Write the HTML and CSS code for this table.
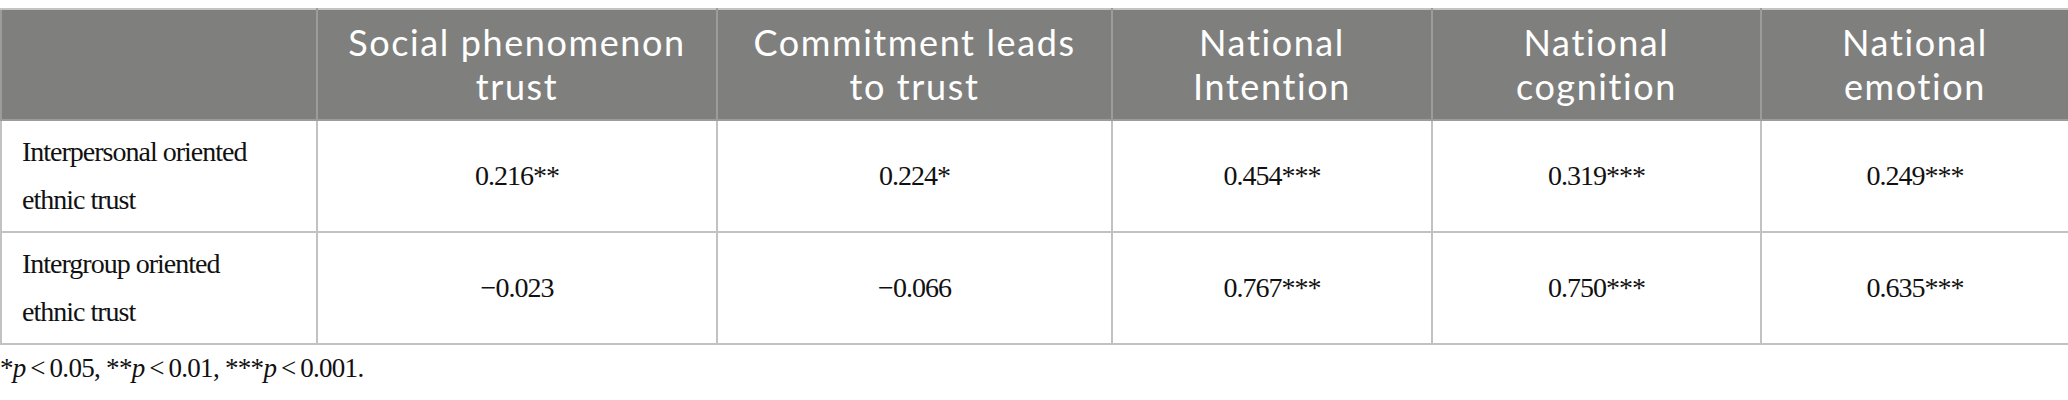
FILE: index.html
```html
<!DOCTYPE html>
<html>
<head>
<meta charset="utf-8">
<link rel="stylesheet" href="styles.css">
</head>
<body>
<div class="wrap">
<table class="data">
  <colgroup>
    <col class="c0"><col class="c1"><col class="c2"><col class="c3"><col class="c4"><col class="c5">
  </colgroup>
  <thead>
    <tr>
      <th></th>
      <th><span class="hl">Social phenomenon</span><span class="hl">trust</span></th>
      <th><span class="hl">Commitment leads</span><span class="hl">to trust</span></th>
      <th><span class="hl">National</span><span class="hl">Intention</span></th>
      <th><span class="hl">National</span><span class="hl">cognition</span></th>
      <th><span class="hl">National</span><span class="hl">emotion</span></th>
    </tr>
  </thead>
  <tbody>
    <tr>
      <td class="label">Interpersonal oriented<br>ethnic trust</td>
      <td>0.216**</td>
      <td>0.224*</td>
      <td>0.454***</td>
      <td>0.319***</td>
      <td>0.249***</td>
    </tr>
    <tr>
      <td class="label">Intergroup oriented<br>ethnic trust</td>
      <td>−0.023</td>
      <td>−0.066</td>
      <td>0.767***</td>
      <td>0.750***</td>
      <td>0.635***</td>
    </tr>
  </tbody>
</table>
<p class="note">*<i>p</i>&#8201;&lt;&#8201;0.05, **<i>p</i>&#8201;&lt;&#8201;0.01, ***<i>p</i>&#8201;&lt;&#8201;0.001.</p>
</div>
</body>
</html>
```

FILE: styles.css
```css
html, body {
  margin: 0;
  padding: 0;
  background: #ffffff;
}

.wrap {
  padding-top: 8px;
  width: 2068px;
}

.data {
  width: 2068px;
  border-collapse: collapse;
  table-layout: fixed;
  font-family: "Liberation Serif", "Times New Roman", serif;
}

.c0 { width: 316px; }
.c1 { width: 400px; }
.c2 { width: 395px; }
.c3 { width: 320px; }
.c4 { width: 329px; }
.c5 { width: 308px; }

.data th {
  background: #7f807e;
  color: #ffffff;
  font-family: Lato, "Open Sans", sans-serif;
  font-weight: 400;
  font-size: 36px;
  letter-spacing: 1.6px;
  line-height: 44px;
  text-align: center;
  padding: 10px 6px 11px;
  border: 2px solid #9c9d9b;
  border-top-color: #c4c4c4;
  height: 88px;
}

.hl {
  display: block;
  white-space: nowrap;
}

.data td {
  border: 2px solid #c2c2c2;
  font-size: 28px;
  letter-spacing: -1px;
  line-height: 48px;
  text-align: center;
  padding: 7px 10px;
  color: #111;
  height: 96px;
}

.data td.label {
  text-align: left;
  padding-left: 20px;
}

.note {
  margin: 8px 0 0;
  font-family: "Liberation Serif", "Times New Roman", serif;
  font-size: 27px;
  letter-spacing: -0.7px;
  line-height: 30px;
  color: #111;
}
```
